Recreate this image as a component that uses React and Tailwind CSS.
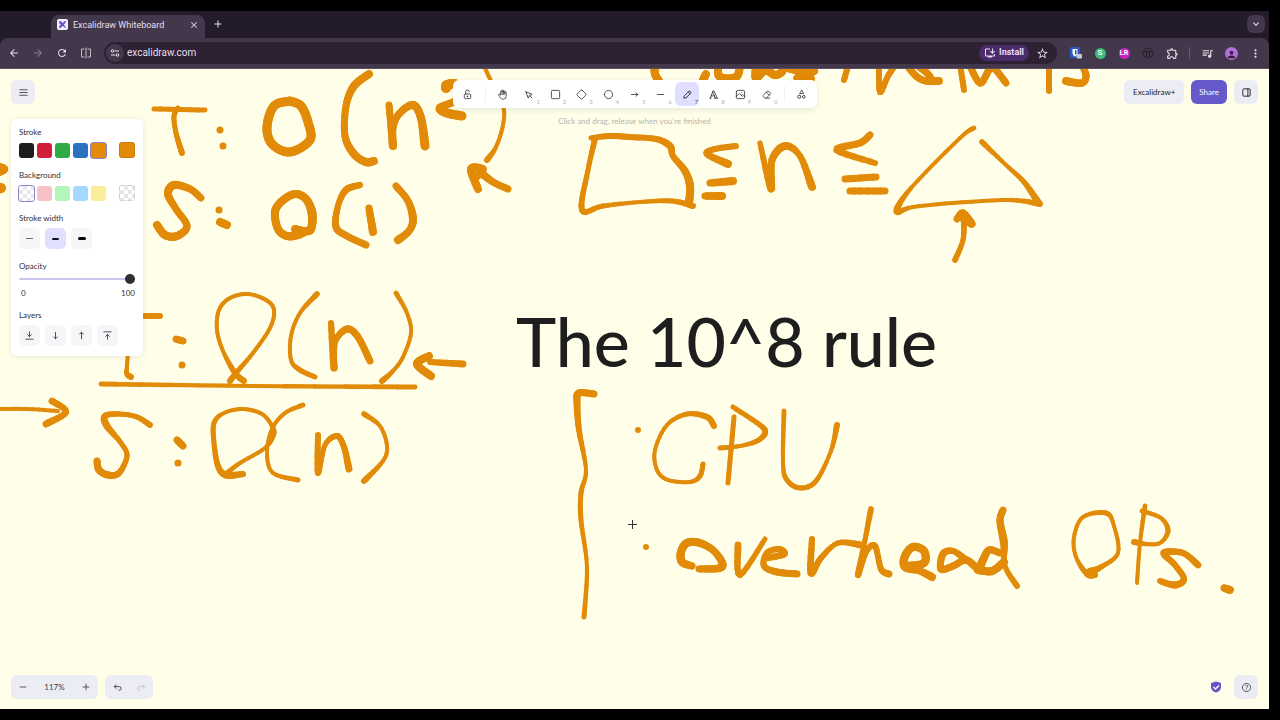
import React, { useState } from 'react'
import clsx from 'clsx'
import {
    MdArrowBack, MdArrowForward, MdRefresh, MdStarBorder, MdOutlineExtension,
    MdQueueMusic, MdMoreVert, MdClose, MdAdd, MdKeyboardArrowDown, MdOutlineInstallDesktop, MdPerson
} from 'react-icons/md'
import {
    TbMenu2, TbLockOpen, TbHandStop, TbSquare, TbSquareRotated, TbCircle, TbArrowNarrowRight, TbMinus,
    TbTypography, TbPhoto, TbEraser, TbTriangleSquareCircle, TbLayoutSidebarRight, TbPlus,
    TbArrowBackUp, TbArrowForwardUp, TbArrowBarToDown, TbArrowNarrowDown, TbArrowNarrowUp, TbArrowBarToUp, TbHelp
} from 'react-icons/tb'

// Each stroke is a list of x, y, width samples from the pen
const STROKES = [
    // cut-off heading
    [[655, 64, 8], [655, 74, 8], [661, 84, 8]],
    [[706, 74, 8], [703, 80, 8]],
    [[718, 66, 8], [720, 77, 8], [736, 77, 8], [740, 66, 8]],
    [[756, 66, 8], [756, 78, 8], [765, 70, 9], [775, 75, 8], [782, 72, 8]],
    [[788, 68, 8], [802, 71, 9], [814, 71, 8], [797, 78, 7], [811, 79, 8]],
    [[848, 66, 6], [844, 80, 6]],
    [[879, 64, 6], [880, 92, 6], [888, 76, 6], [896, 64, 6]],
    [[906, 64, 7], [916, 76, 7], [926, 81, 7], [939, 81, 8]],
    [[918, 66, 7], [927, 73, 7], [932, 80, 7]],
    [[960, 64, 6], [964, 90, 6]],
    [[969, 64, 7], [980, 83, 7], [989, 70, 7], [994, 68, 7], [1006, 83, 7]],
    [[1049, 64, 6], [1049, 91, 6]],
    [[1081, 64, 6], [1086, 75, 7], [1082, 83, 7], [1066, 81, 8]],
    // T: O(n^2)
    [[154, 109, 5], [205, 110, 5]],
    [[178, 108, 5], [174, 116, 5], [176, 133, 5], [182, 153, 6]],
    [[220, 130, 7]],
    [[223, 146, 7]],
    [[290, 101, 9], [274, 106, 9], [267, 127, 9], [272, 144, 9], [290, 152, 9], [310, 140, 9], [308, 122, 9], [301, 106, 9], [290, 101, 9]],
    [[369, 74, 8], [354, 86, 8], [346, 106, 7], [345, 136, 7], [354, 154, 8], [366, 162, 8], [374, 161, 8]],
    [[389, 105, 7], [391, 126, 7], [393, 146, 8], [393, 128, 7], [399, 114, 7], [413, 105, 8], [421, 118, 8], [425, 146, 9]],
    [[446, 88, 10], [447, 85, 10], [456, 84, 9], [463, 92, 8], [455, 101, 7], [440, 108, 8], [447, 113, 9], [462, 116, 9]],
    [[485, 68, 4], [490, 79, 4], [503, 106, 4], [503, 125, 4], [496, 147, 4], [487, 160, 6]],
    [[508, 189, 7], [493, 182, 7], [480, 172, 8]],
    [[478, 189, 8], [471, 169, 8], [483, 169, 7], [476, 177, 8]],
    // S: O(1)
    [[201, 198, 7], [190, 189, 7], [174, 185, 8], [168, 194, 8], [176, 209, 7], [187, 226, 7], [177, 236, 8], [165, 235, 8], [157, 225, 8]],
    [[219, 210, 7]],
    [[220, 222, 8], [227, 225, 8]],
    [[295, 229, 8], [304, 231, 8], [311, 229, 8], [312, 213, 9], [306, 199, 8], [295, 194, 8], [282, 201, 8], [275, 212, 8], [278, 229, 8], [287, 236, 8], [298, 235, 8], [306, 231, 8]],
    [[360, 185, 6], [346, 190, 7], [338, 206, 6], [336, 227, 7], [347, 236, 7], [366, 245, 7]],
    [[369, 208, 7], [373, 232, 8]],
    [[396, 186, 7], [408, 201, 7], [413, 219, 8], [409, 231, 7], [398, 240, 8]],
    // T: O(n)
    [[112, 316, 5], [160, 316, 6]],
    [[129, 340, 4], [127, 366, 4], [127, 374, 5], [131, 377, 6]],
    [[176, 339, 7], [183, 341, 7]],
    [[182, 365, 7]],
    [[244, 381, 6], [235, 373, 6], [223, 351, 4], [217, 330, 4], [219, 310, 4], [230, 298, 4], [248, 294, 4], [266, 300, 4], [274, 310, 4], [270, 328, 4], [253, 353, 4], [236, 373, 5], [230, 381, 6]],
    [[317, 294, 6], [300, 313, 4], [291, 336, 4], [291, 360, 4], [300, 370, 5], [315, 377, 5]],
    [[331, 323, 6], [334, 368, 7], [335, 342, 6], [347, 329, 7], [358, 337, 7], [370, 361, 7]],
    [[396, 293, 5], [407, 313, 4], [411, 333, 4], [403, 357, 4], [393, 371, 4], [382, 381, 6]],
    [[463, 364, 7], [430, 362, 6]],
    [[429, 356, 8], [417, 364, 8], [431, 376, 8]],
    [[101, 384, 5], [256, 386, 4], [415, 387, 5]],
    // S: O(n)
    [[150, 425, 6], [137, 417, 5], [120, 414, 5], [105, 416, 6], [107, 426, 7], [121, 443, 5], [127, 456, 5], [119, 473, 6], [108, 475, 7], [99, 470, 7], [97, 461, 7]],
    [[177, 440, 7], [183, 446, 7]],
    [[178, 463, 7]],
    [[243, 474, 6], [226, 475, 7], [218, 466, 6], [214, 443, 5], [214, 423, 5], [224, 413, 4], [243, 409, 4], [262, 414, 4], [272, 426, 4], [273, 435, 6], [265, 448, 4], [240, 463, 4], [227, 473, 5]],
    [[303, 405, 5], [285, 413, 4], [272, 429, 4], [267, 453, 4], [273, 473, 4], [298, 480, 5]],
    [[318, 435, 6], [318, 473, 6], [325, 445, 5], [337, 436, 6], [344, 447, 6], [349, 469, 7]],
    [[364, 414, 6], [380, 426, 4], [387, 446, 4], [383, 461, 4], [364, 481, 6]],
    // left edge
    [[-4, 166, 8], [4, 169, 8], [-3, 173, 8]],
    [[-4, 189, 10], [1, 188, 10]],
    [[-4, 409, 4], [27, 409, 4], [58, 411, 4]],
    [[52, 401, 7], [66, 412, 6], [46, 424, 7]],
    // box <= n <= triangle
    [[591, 138, 5], [610, 136, 6], [630, 137, 6], [656, 139, 6], [670, 146, 7], [673, 156, 6], [685, 171, 7], [690, 186, 8], [689, 203, 8]],
    [[595, 139, 6], [588, 170, 5], [582, 210, 6], [603, 206, 5], [640, 202, 4], [672, 201, 5], [693, 206, 6]],
    [[736, 146, 6], [715, 149, 6], [707, 154, 6], [728, 164, 8]],
    [[710, 183, 7], [733, 181, 8]],
    [[705, 196, 7], [722, 196, 8]],
    [[760, 143, 5], [771, 189, 7], [772, 160, 7], [785, 146, 8], [800, 156, 6], [812, 187, 8]],
    [[870, 135, 7], [860, 143, 7], [837, 150, 7], [875, 163, 6]],
    [[845, 179, 7], [876, 177, 7]],
    [[850, 191, 7], [885, 191, 7]],
    [[974, 128, 5], [960, 138, 4], [911, 188, 4], [897, 211, 7], [913, 207, 4], [953, 203, 4], [1010, 200, 4], [1040, 204, 6]],
    [[982, 142, 6], [1006, 165, 4], [1024, 182, 5], [1038, 202, 7]],
    [[955, 260, 6], [963, 240, 5], [964, 219, 6]],
    [[957, 219, 7], [963, 213, 7], [972, 224, 7], [963, 219, 7]],
    // bracket
    [[594, 394, 7], [579, 393, 7], [577, 402, 7], [579, 430, 6], [586, 470, 4], [581, 493, 5], [581, 520, 5], [587, 567, 4], [584, 617, 5]],
    // CPU
    [[638, 430, 6]],
    [[714, 426, 6], [707, 417, 6], [687, 414, 5], [667, 425, 4], [655, 450, 4], [657, 470, 4], [668, 480, 4], [690, 482, 4], [700, 476, 5], [703, 464, 5]],
    [[734, 417, 5], [728, 483, 5]],
    [[733, 407, 5], [760, 425, 5], [765, 433, 6], [757, 441, 5], [740, 446, 4], [720, 448, 5]],
    [[784, 411, 5], [783, 463, 4], [787, 480, 5], [800, 488, 5], [816, 481, 5], [831, 451, 4], [837, 425, 6]],
    // overhead
    [[646, 547, 6]],
    [[692, 566, 7], [682, 562, 8], [681, 552, 8], [687, 543, 8], [700, 543, 8], [715, 552, 7], [722, 567, 8], [699, 569, 7]],
    [[738, 545, 7], [740, 575, 6], [765, 539, 5]],
    [[768, 558, 6], [784, 554, 7], [779, 549, 6], [767, 553, 6], [764, 566, 6], [777, 572, 7], [797, 574, 7]],
    [[812, 539, 6], [811, 573, 7], [821, 558, 6], [838, 543, 5], [861, 545, 7]],
    [[871, 509, 6], [865, 540, 5], [858, 575, 6], [866, 552, 6], [875, 546, 6], [881, 569, 6], [889, 574, 7]],
    [[907, 566, 8], [924, 563, 8], [924, 551, 8], [913, 547, 8], [905, 556, 8], [905, 567, 8], [920, 571, 7], [932, 577, 8]],
    [[965, 559, 7], [953, 551, 6], [943, 554, 7], [941, 569, 7], [953, 566, 7], [966, 560, 7], [978, 568, 8], [983, 560, 8], [989, 550, 7], [1000, 553, 7]],
    [[978, 570, 8], [992, 571, 8], [1004, 562, 8]],
    [[1003, 510, 7], [1000, 521, 7], [1004, 543, 8], [1005, 566, 5], [1017, 586, 6]],
    // OPs.
    [[1095, 575, 6], [1087, 574, 6], [1076, 557, 4], [1074, 537, 4], [1083, 517, 4], [1106, 513, 5], [1114, 526, 4], [1118, 553, 4], [1101, 567, 5], [1090, 572, 8]],
    [[1145, 506, 5], [1140, 543, 4], [1137, 583, 4]],
    [[1142, 511, 5], [1161, 518, 4], [1168, 531, 5], [1160, 543, 4], [1146, 544, 4], [1134, 542, 6]],
    [[1198, 565, 7], [1183, 553, 6], [1164, 553, 7], [1175, 565, 6], [1184, 579, 6], [1175, 585, 7], [1160, 581, 6]],
    [[1224, 588, 7], [1230, 590, 8]]
]

const SCROLL_Y = -69
const STEPS = 6

// Catmull-Rom between b and c
const spline = (a, b, c, d, t) =>
    0.5 * (2 * b + (c - a) * t + (2 * a - 5 * b + 4 * c - d) * t * t + (3 * b - a - 3 * c + d) * t * t * t)

function PenStroke({ points }) {
    if (points.length === 1) {
        const [x, y, w] = points[0]
        return <circle cx={x} cy={y} r={w / 2} fill="#e18b09" />
    }
    const samples = []
    for (let i = 0; i < points.length - 1; i++) {
        const a = points[i - 1] || points[i]
        const b = points[i]
        const c = points[i + 1]
        const d = points[i + 2] || c
        for (let s = 0; s < STEPS; s++) {
            const t = s / STEPS
            samples.push([spline(a[0], b[0], c[0], d[0], t), spline(a[1], b[1], c[1], d[1], t), b[2] + (c[2] - b[2]) * t])
        }
    }
    samples.push(points[points.length - 1])
    return (
        <g stroke="#e18b09" strokeLinecap="round">
            {samples.slice(1).map((p, i) => (
                <line key={i} x1={samples[i][0]} y1={samples[i][1]} x2={p[0]} y2={p[1]} strokeWidth={p[2]} />
            ))}
        </g>
    )
}

function PointerIcon({ size }) {
    return (
        <svg width={size} height={size} viewBox="0 0 22 22" fill="none" stroke="currentColor" strokeWidth="1.5" strokeLinecap="round" strokeLinejoin="round">
            <path d="M6 6l4.153 11.793a.365.365 0 0 0 .331.207.366.366 0 0 0 .332-.207l2.184-4.793 4.787-1.994a.355.355 0 0 0 .213-.323.355.355 0 0 0-.213-.323L6 6z" />
            <path d="M13.5 13.5l4.5 4.5" />
        </svg>
    )
}

function PenIcon({ size }) {
    return (
        <svg width={size} height={size} viewBox="0 0 20 20" fill="none" stroke="currentColor" strokeWidth="1.5" strokeLinecap="round" strokeLinejoin="round">
            <path d="m7.643 15.69 7.774-7.773a2.357 2.357 0 1 0-3.334-3.334L4.31 12.357a3.333 3.333 0 0 0-.977 2.357v1.953h1.953c.884 0 1.732-.352 2.357-.977Z" />
            <path d="m11.25 5.417 3.333 3.333" />
        </svg>
    )
}

function SplitIcon() {
    return (
        <svg width="12" height="12" viewBox="0 0 24 24" fill="none" stroke="currentColor" strokeWidth="2">
            <path d="M9 4H3v16h6M15 4h6v16h-6M12 1v22" />
        </svg>
    )
}

function TuneIcon() {
    return (
        <svg width="10" height="10" viewBox="0 0 20 20" fill="none" stroke="currentColor" strokeWidth="2">
            <circle cx="5" cy="6" r="2.5" />
            <path d="M9 6h9M2 14h9" />
            <circle cx="15" cy="14" r="2.5" />
        </svg>
    )
}

function Favicon() {
    return (
        <svg width="11" height="11" viewBox="0 0 22 22">
            <rect width="22" height="22" rx="4" fill="#f4f1ff" />
            <path d="M4 4l5 1 9 12-1 1L5 9zM18 4l-4 1-3 4 3 2 4-5zM4 18l1-5 4-2 2 3-4 4z" fill="#6350c9" />
        </svg>
    )
}

const TOOLS = [
    { name: 'Hand', icon: TbHandStop },
    { name: 'Selection', icon: PointerIcon, key: '1' },
    { name: 'Rectangle', icon: TbSquare, key: '2' },
    { name: 'Diamond', icon: TbSquareRotated, key: '3' },
    { name: 'Ellipse', icon: TbCircle, key: '4' },
    { name: 'Arrow', icon: TbArrowNarrowRight, key: '5' },
    { name: 'Line', icon: TbMinus, key: '6' },
    { name: 'Draw', icon: PenIcon, key: '7' },
    { name: 'Text', icon: TbTypography, key: '8' },
    { name: 'Image', icon: TbPhoto, key: '9' },
    { name: 'Eraser', icon: TbEraser, key: '0' }
]

const STROKE_COLORS = [
    { name: 'Black', color: 'bg-[#1e1e1e]' },
    { name: 'Red', color: 'bg-[#d11f3a]' },
    { name: 'Green', color: 'bg-[#2fac46]' },
    { name: 'Blue', color: 'bg-[#2c70c0]' },
    { name: 'Orange', color: 'bg-[#e18b09]' }
]

const CHECKER = 'bg-[repeating-conic-gradient(#e6e6ec_0_25%,#ffffff_0_50%)] bg-[length:8px_8px]'

const FILL_COLORS = [
    { name: 'Transparent', color: CHECKER },
    { name: 'Light red', color: 'bg-[#f6c2c8]' },
    { name: 'Light green', color: 'bg-[#b4f5bb]' },
    { name: 'Light blue', color: 'bg-[#a5d8ff]' },
    { name: 'Light yellow', color: 'bg-[#f8ee97]' }
]

const WIDTHS = [
    { name: 'Thin', bar: 'h-px w-[7px] bg-[#6b6b75]' },
    { name: 'Bold', bar: 'h-[2px] w-[7px] rounded-full bg-[#16131f]' },
    { name: 'Extra bold', bar: 'h-[3px] w-[8px] rounded-full bg-black' }
]

const LAYERS = [
    { name: 'Send to back', icon: TbArrowBarToDown },
    { name: 'Send backward', icon: TbArrowNarrowDown },
    { name: 'Bring forward', icon: TbArrowNarrowUp },
    { name: 'Bring to front', icon: TbArrowBarToUp }
]

function ChromeButton({ label, className, children }) {
    return (
        <button aria-label={label} className={clsx('flex size-6 shrink-0 items-center justify-center', className)}>
            {children}
        </button>
    )
}

function BrowserBar() {
    return (
        <header className="bg-[#231a2b] font-[Roboto,sans-serif] text-[#e6dfea]">
            <div className="flex h-[27px] items-end justify-between pr-1 pl-[51px]">
                <div className="flex items-end">
                    <div className="flex h-[23px] w-[154px] items-center rounded-t-lg bg-[#43384b] px-[6px] pb-[4px]">
                        <Favicon />
                        <span className="ml-[5px] flex-1 text-[9px] leading-[12px]">Excalidraw Whiteboard</span>
                        <button aria-label="Close tab"><MdClose size={10} /></button>
                    </div>
                    <button aria-label="New tab" className="mb-[8px] ml-[7px]"><MdAdd size={12} /></button>
                </div>
                <button aria-label="Search tabs" className="mb-[5px] flex size-[18px] items-center justify-center rounded-md bg-[#43384b]">
                    <MdKeyboardArrowDown size={12} />
                </button>
            </div>
            <div className="flex h-[31px] items-center rounded-t-lg border-b border-[#5a4f61] bg-[#43384b] px-[2px]">
                <ChromeButton label="Back"><MdArrowBack size={12} /></ChromeButton>
                <ChromeButton label="Forward" className="text-[#85798c]"><MdArrowForward size={12} /></ChromeButton>
                <ChromeButton label="Reload"><MdRefresh size={12} /></ChromeButton>
                <ChromeButton label="Split view" className="text-[#c3bac8]"><SplitIcon /></ChromeButton>
                <div className="ml-[6px] flex h-[22px] flex-1 items-center rounded-full bg-[#2d2133] pr-[8px] pl-[2px]">
                    <button aria-label="Site information" className="flex size-[18px] items-center justify-center rounded-full bg-[#43384b]"><TuneIcon /></button>
                    <input
                        aria-label="Address"
                        defaultValue="excalidraw.com"
                        className="ml-[3px] min-w-0 flex-1 bg-transparent text-[10px] leading-[14px] outline-none"
                    />
                    <button className="flex h-4 items-center gap-[3px] rounded-full bg-[#4c2b6b] px-[5px] text-[9px] font-bold text-[#eadcf8]">
                        <MdOutlineInstallDesktop size={12} />
                        Install
                    </button>
                    <button aria-label="Bookmark" className="ml-[7px]"><MdStarBorder size={13} /></button>
                </div>
                <div className="ml-[7px] flex items-center">
                    <ChromeButton label="Password manager">
                        <svg width="12" height="12" viewBox="0 0 24 24">
                            <rect width="20" height="22" rx="3" fill="#2a56c6" />
                            <path d="M5 4h10v8c0 4-3 6-5 7-2-1-5-3-5-7z" fill="#fff" />
                            <path d="M10 6h3v6c0 2-1 3-3 4z" fill="#2a56c6" />
                            <rect x="13" y="14" width="11" height="9" rx="2" fill="#c9c9d2" />
                        </svg>
                    </ChromeButton>
                    <ChromeButton label="Extension S">
                        <span className="flex size-[11px] items-center justify-center rounded-full bg-[#3fba78] text-[8px] leading-none font-bold text-white">S</span>
                    </ChromeButton>
                    <ChromeButton label="Extension LR">
                        <span className="flex size-[11px] items-center justify-center rounded-full bg-[#cc22c4] text-[7px] leading-none font-bold text-white">LR</span>
                    </ChromeButton>
                    <ChromeButton label="Extension T" className="text-[#1d1522]">
                        <svg width="12" height="12" viewBox="0 0 24 24" fill="none" stroke="currentColor" strokeWidth="1.5">
                            <circle cx="12" cy="12" r="10" />
                            <path d="M4 9h16M9 9v11M15 9v11" />
                        </svg>
                    </ChromeButton>
                    <ChromeButton label="Extensions"><MdOutlineExtension size={13} /></ChromeButton>
                    <div className="mx-[5px] h-3 w-px bg-[#665a6e]" />
                    <ChromeButton label="Media controls"><MdQueueMusic size={13} /></ChromeButton>
                    <ChromeButton label="Profile">
                        <span className="flex size-[13px] items-end justify-center overflow-hidden rounded-full bg-[#b070dc] text-[#33203f]"><MdPerson size={11} /></span>
                    </ChromeButton>
                    <ChromeButton label="Menu"><MdMoreVert size={13} /></ChromeButton>
                </div>
            </div>
        </header>
    )
}

function Toolbar() {
    const [active, setActive] = useState('Draw')
    return (
        <div className="flex flex-col items-center">
            <div className="flex items-center rounded-md bg-white px-[3px] py-[2px] shadow-[0_2px_6px_rgba(0,0,0,0.09)]">
                <button aria-label="Keep tool active" className="flex size-6 items-center justify-center"><TbLockOpen size={11} strokeWidth={1.6} /></button>
                <div className="mx-[5px] h-4 w-px bg-[#f1f0f5]" />
                <div className="flex w-72 justify-between">
                    {TOOLS.map(({ name, icon: Icon, key }) => (
                        <button
                            key={name}
                            aria-label={name}
                            onClick={() => setActive(name)}
                            className={clsx('relative flex size-6 items-center justify-center rounded-md', active === name && 'bg-[#e0dfff]')}
                        >
                            <Icon size={11} strokeWidth={1.6} />
                            {key && (
                                <span className={clsx('absolute right-px bottom-px text-[6px] leading-[6px]', active === name ? 'text-[#4a4577]' : 'text-[#b2b2ba]')}>{key}</span>
                            )}
                        </button>
                    ))}
                </div>
                <div className="mx-[5px] h-4 w-px bg-[#f1f0f5]" />
                <button aria-label="More tools" className="flex size-6 items-center justify-center"><TbTriangleSquareCircle size={11} strokeWidth={1.6} /></button>
            </div>
            <p className="mt-[8px] text-[8px] leading-[11px] text-[#b6b5ab]">Click and drag, release when you're finished</p>
        </div>
    )
}

function Swatches({ colors, selected, current, label }) {
    return (
        <div className="mt-1 flex items-center justify-between">
            <div className="flex gap-[3px]">
                {colors.map(({ name, color }) => (
                    <button
                        key={name}
                        aria-label={name}
                        className={clsx('size-[15px] rounded-[3px]', color, name === selected && 'ring-1 ring-[#8b82c9]')}
                    />
                ))}
            </div>
            <button aria-label={label} className={clsx('size-4 rounded-[3px] border border-black/10', current)} />
        </div>
    )
}

function StylePanel() {
    const [opacity, setOpacity] = useState(100)
    return (
        <aside className="mt-[15px] flex w-[132px] flex-col gap-3 rounded-md bg-white px-2 pt-2 pb-[10px] text-[8px] leading-[11px] text-[#2f2f38] shadow-[0_1px_6px_rgba(0,0,0,0.09)]">
            <section>
                <h3>Stroke</h3>
                <Swatches colors={STROKE_COLORS} selected="Orange" current="bg-[#e18b09]" label="Stroke color" />
            </section>
            <section>
                <h3>Background</h3>
                <Swatches colors={FILL_COLORS} selected="Transparent" current={CHECKER} label="Background color" />
            </section>
            <section>
                <h3>Stroke width</h3>
                <div className="mt-1 flex gap-[5px]">
                    {WIDTHS.map(({ name, bar }) => (
                        <button
                            key={name}
                            aria-label={name}
                            className={clsx('flex size-[21px] items-center justify-center rounded-[5px]', name === 'Bold' ? 'bg-[#e0dfff]' : 'bg-[#f6f6f9]')}
                        >
                            <span className={bar} />
                        </button>
                    ))}
                </div>
            </section>
            <section>
                <label htmlFor="opacity" className="block">Opacity</label>
                <input
                    id="opacity"
                    type="range"
                    min="0"
                    max="100"
                    value={opacity}
                    onChange={(e) => setOpacity(Number(e.target.value))}
                    className="mt-[2px] block h-[10px] w-full appearance-none bg-transparent [&::-webkit-slider-runnable-track]:h-[2px] [&::-webkit-slider-runnable-track]:rounded-full [&::-webkit-slider-runnable-track]:bg-[#c9c5ee] [&::-webkit-slider-thumb]:-mt-1 [&::-webkit-slider-thumb]:size-[10px] [&::-webkit-slider-thumb]:appearance-none [&::-webkit-slider-thumb]:rounded-full [&::-webkit-slider-thumb]:bg-[#2f2f33]"
                />
                <div className="mt-[5px] flex justify-between pl-[2px] leading-[9px]">
                    <span>0</span>
                    <span>{opacity}</span>
                </div>
            </section>
            <section>
                <h3>Layers</h3>
                <div className="mt-1 flex gap-[5px]">
                    {LAYERS.map(({ name, icon: Icon }) => (
                        <button key={name} aria-label={name} className="flex size-[21px] items-center justify-center rounded-[5px] bg-[#f6f6f9]">
                            <Icon size={11} strokeWidth={1.8} />
                        </button>
                    ))}
                </div>
            </section>
        </aside>
    )
}

function Footer() {
    return (
        <footer className="flex items-center justify-between text-[#3d3d47]">
            <div className="flex gap-[7px]">
                <div className="flex items-center rounded-md bg-[#ececf4]">
                    <button aria-label="Zoom out" className="flex size-6 items-center justify-center"><TbMinus size={10} /></button>
                    <button className="w-[39px] text-center text-[8px] leading-[11px]">117%</button>
                    <button aria-label="Zoom in" className="flex size-6 items-center justify-center"><TbPlus size={10} /></button>
                </div>
                <div className="flex items-center rounded-md bg-[#ececf4]">
                    <button aria-label="Undo" className="flex size-6 items-center justify-center"><TbArrowBackUp size={11} /></button>
                    <button aria-label="Redo" disabled className="flex size-6 items-center justify-center text-[#c4c4cd]"><TbArrowForwardUp size={11} /></button>
                </div>
            </div>
            <div className="flex items-center gap-3">
                <a href="#encryption" aria-label="End-to-end encrypted">
                    <svg width="12" height="12" viewBox="0 0 24 24">
                        <path d="M12 1l10 3v8c0 6-4 9-10 11C6 21 2 18 2 12V4z" fill="#6753c4" />
                        <path d="M7 12l4 4 7-7" fill="none" stroke="#fff" strokeWidth="2.5" />
                    </svg>
                </a>
                <button aria-label="Help" className="flex size-6 items-center justify-center rounded-md bg-[#ececf4]"><TbHelp size={11} strokeWidth={1.8} /></button>
            </div>
        </footer>
    )
}

export default function App() {
    return (
        <div className="h-screen bg-black py-[11px] pr-[11px]">
            <div className="flex h-full flex-col">
                <BrowserBar />
                <main className="relative flex-1 overflow-hidden bg-[#fffee9] font-[Lato,sans-serif] text-[#1b1b1f]">
                    {/* Drawing surface */}
                    <svg className="absolute inset-0 size-full">
                        <g transform={`translate(0 ${SCROLL_Y})`}>
                            {STROKES.map((points, i) => <PenStroke key={i} points={points} />)}
                            <path d="M628 524.5h9M632.5 520v9" stroke="#333" />
                        </g>
                    </svg>
                    <h1 className="absolute top-[232px] left-[516px] text-[68px] leading-[80px] font-medium whitespace-nowrap text-[#1e1e1e]">The 10^8 rule</h1>

                    {/* Floating UI */}
                    <div className="relative flex h-full flex-col justify-between px-[11px] pt-[11px] pb-[10px]">
                        <div>
                            <div className="grid h-6 grid-cols-[1fr_auto_1fr] items-start">
                                <button aria-label="Main menu" className="flex size-6 items-center justify-center rounded-md bg-[#ececf4]"><TbMenu2 size={11} strokeWidth={1.6} /></button>
                                <Toolbar />
                                <div className="flex justify-end gap-[7px] text-[8px]">
                                    <a href="#plus" className="flex h-6 items-center rounded-md bg-[#ececf4] px-[9px]">Excalidraw+</a>
                                    <button className="h-6 rounded-md bg-[#6659cc] px-2 text-white">Share</button>
                                    <button aria-label="Library" className="flex size-6 items-center justify-center rounded-md bg-[#ececf4]"><TbLayoutSidebarRight size={11} /></button>
                                </div>
                            </div>
                            <StylePanel />
                        </div>
                        <Footer />
                    </div>
                </main>
            </div>
        </div>
    )
}
